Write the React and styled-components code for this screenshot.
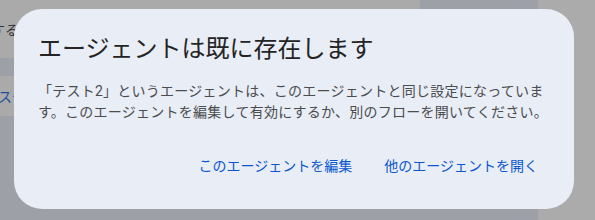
import React from "react"
import styled, { createGlobalStyle } from "styled-components"

const GlobalStyle = createGlobalStyle`
  html, body {
    margin: 0;
    padding: 0;
    background: #9ea0a7;
  }
  body {
    font-family: "Roboto", "Noto Sans CJK JP", "Noto Sans", sans-serif;
  }
`

const Page = styled.div`
  position: relative;
  width: 595px;
  height: 220px;
  overflow: hidden;
  display: flex;
`

const Main = styled.div`
  width: 538px;
  background: #9ea0a7;
  display: flex;
  flex-direction: column;
`

const SidePanel = styled.div`
  flex: 1;
  background: #ababab;
`

const Card = styled.div`
  width: 420px;
  height: ${(p) => p.h}px;
  margin-top: ${(p) => p.mt || 0}px;
  background: #aaaaaa;
  display: flex;
  align-items: center;
  overflow: hidden;
  white-space: nowrap;
  font-size: 14px;
`

const CardText = styled.span`
  margin-left: ${(p) => p.offset}px;
  color: ${(p) => (p.link ? "#1e4f9c" : "#333333")};
`

const Dialog = styled.div`
  position: absolute;
  left: 14px;
  top: 9px;
  width: 560px;
  box-sizing: border-box;
  padding: 24px;
  background: #e9edf6;
  border-radius: 28px;
  display: flex;
  flex-direction: column;
`

const Title = styled.h2`
  margin: 0;
  font-size: 24px;
  line-height: 32px;
  font-weight: 400;
  color: #242424;
`

const Body = styled.p`
  margin: 16px 0 0;
  font-size: 14px;
  line-height: 21px;
  letter-spacing: 0.25px;
  color: #4a4c4e;
`

const Actions = styled.div`
  display: flex;
  justify-content: flex-end;
  gap: 8px;
  padding-top: 22px;
`

const TextButton = styled.button`
  height: 40px;
  padding: 0 12px;
  border: none;
  border-radius: 20px;
  background: transparent;
  font-family: inherit;
  font-size: 14px;
  font-weight: 400;
  color: #0b57d0;
  cursor: pointer;
`

export default function App() {
  return (
    <>
      <GlobalStyle />
      <Page>
        <Main>
          <Card h={58}>
            <CardText offset={-9}>する</CardText>
          </Card>
          <Card h={40} mt={18}>
            <CardText offset={-2} link>
              ステ
            </CardText>
          </Card>
        </Main>
        <SidePanel />
        <Dialog role="dialog">
          <Title>エージェントは既に存在します</Title>
          <Body>
            「テスト2」というエージェントは、このエージェントと同じ設定になっています。このエージェントを編集して有効にするか、別のフローを開いてください。
          </Body>
          <Actions>
            <TextButton>このエージェントを編集</TextButton>
            <TextButton>他のエージェントを開く</TextButton>
          </Actions>
        </Dialog>
      </Page>
    </>
  )
}
